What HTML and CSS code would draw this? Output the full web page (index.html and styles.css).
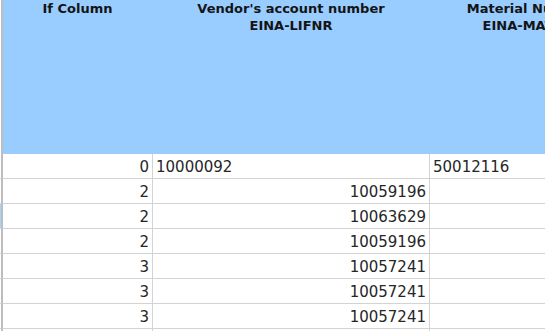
FILE: index.html
```html
<!DOCTYPE html>
<html>
<head>
<meta charset="utf-8">
<link rel="stylesheet" href="styles.css">
</head>
<body>
<table class="sheet">
  <colgroup>
    <col class="c-gutter">
    <col class="c-if">
    <col class="c-vendor">
    <col class="c-mat">
  </colgroup>
  <thead>
    <tr class="head">
      <th class="gutter"></th>
      <th>If Column</th>
      <th>Vendor's account number<br>EINA-LIFNR</th>
      <th>Material Number<br>EINA-MATNR</th>
    </tr>
  </thead>
  <tbody>
    <tr><td class="gutter"></td><td class="num">0</td><td class="txt">10000092</td><td class="txt">50012116</td></tr>
    <tr><td class="gutter"></td><td class="num">2</td><td class="num">10059196</td><td></td></tr>
    <tr><td class="gutter sel"></td><td class="num">2</td><td class="num">10063629</td><td></td></tr>
    <tr><td class="gutter"></td><td class="num">2</td><td class="num">10059196</td><td></td></tr>
    <tr><td class="gutter"></td><td class="num">3</td><td class="num">10057241</td><td></td></tr>
    <tr><td class="gutter"></td><td class="num">3</td><td class="num">10057241</td><td></td></tr>
    <tr><td class="gutter"></td><td class="num">3</td><td class="num">10057241</td><td></td></tr>
    <tr><td class="gutter"></td><td class="num"></td><td class="num"></td><td></td></tr>
  </tbody>
</table>
</body>
</html>
```

FILE: styles.css
```css
html, body {
  margin: 0;
  padding: 0;
  background: #ffffff;
  overflow: hidden;
  width: 545px;
  height: 331px;
}

.sheet {
  border-collapse: separate;
  border-spacing: 0;
  table-layout: fixed;
  width: 628px;
  font-family: "DejaVu Sans", Verdana, sans-serif;
  color: #1c1c1c;
}

.c-gutter { width: 3px; }
.c-if { width: 150px; }
.c-vendor { width: 277px; }
.c-mat { width: 198px; }

.sheet th,
.sheet td {
  padding: 0;
  box-sizing: border-box;
}

.head th {
  height: 154px;
  background: #99ccff;
  border-right: 1px solid #99ccff;
  vertical-align: top;
  text-align: center;
  font-weight: bold;
  font-size: 13px;
  line-height: 17px;
  white-space: nowrap;
  overflow: hidden;
  color: #141414;
}

.head th.gutter {
  background: #ffffff;
  border-right: 2px solid #bdbdbd;
}

.sheet td {
  height: 25px;
  padding-top: 2px;
  font-size: 15px;
  line-height: 22px;
  border-right: 1px solid #d3d3d3;
  border-bottom: 1px solid #d3d3d3;
  white-space: nowrap;
  overflow: hidden;
  color: #262626;
  vertical-align: top;
}

.sheet td.gutter {
  border-right: 2px solid #bdbdbd;
  border-bottom: 1px solid #d3d3d3;
}

.sheet td.gutter.sel {
  background: #a6d2ff;
}

.num {
  text-align: right;
  padding-right: 3px !important;
}

.txt {
  text-align: left;
  padding-left: 3px !important;
}
```
